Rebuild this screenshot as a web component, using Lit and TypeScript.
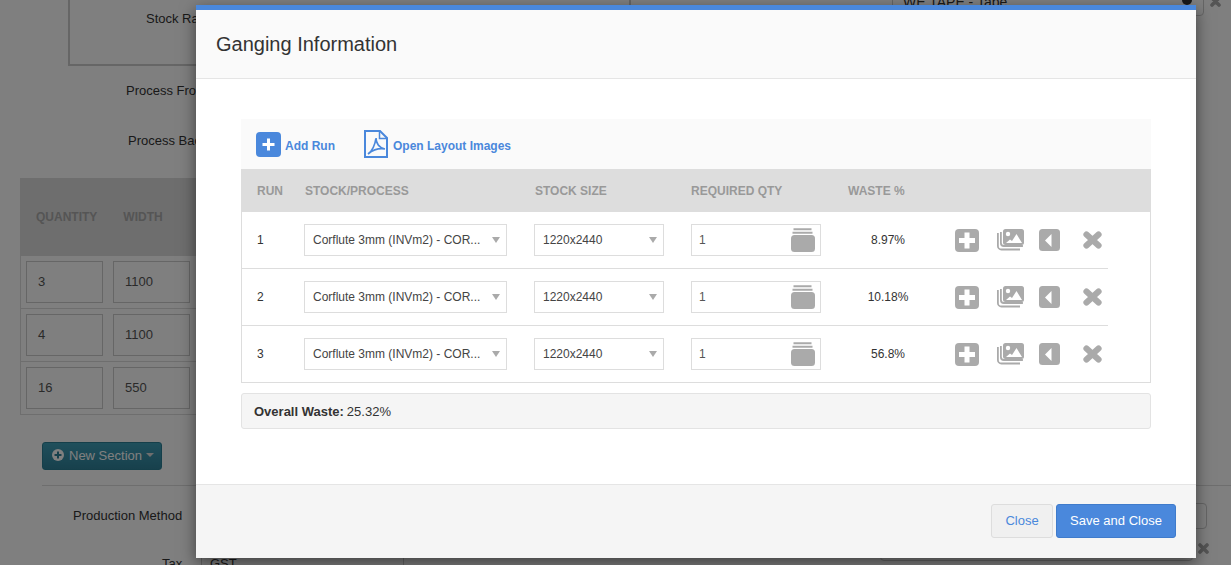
import { LitElement, css, html } from "lit";
import { customElement } from "lit/decorators.js";

const runs = [
  { id: 1, waste: "8.97%" },
  { id: 2, waste: "10.18%" },
  { id: 3, waste: "56.8%" },
];

const bgRows = [
  ["3", "1100"],
  ["4", "1100"],
  ["16", "550"],
];

const addIcon = html`<svg class="ic" width="25" height="25" viewBox="0 0 25 25">
  <rect width="25" height="25" rx="4" fill="currentColor"></rect>
  <path d="M12.500 6.500v12M6.500 12.500h12" stroke="#fff" stroke-width="3" fill="none"></path>
</svg>`;

const plusIcon = html`<svg class="ic" width="24" height="23" viewBox="0 0 24 23">
  <rect width="24" height="23" rx="4" fill="currentColor"></rect>
  <path d="M12 3.500v16M4 11.500h16" stroke="#fff" stroke-width="5" fill="none"></path>
</svg>`;

const stackIcon = html`<svg class="ic" width="27" height="22" viewBox="0 0 27 22" fill="none" stroke="currentColor">
  <path d="M.9 4v13a3.500 3.500 0 0 0 3.500 3.500h18.600" stroke-width="1.800"></path>
  <path d="M3.900 3v11a3 3 0 0 0 3 3h19" stroke-width="1.800"></path>
  <rect x="6" width="21" height="16" rx="2.500" fill="currentColor" stroke="none"></rect>
  <circle cx="11" cy="5" r="2.200" fill="#fff" stroke="none"></circle>
  <path d="M9 14l4-3.500 2 1.500 4.500-7 5.500 9z" fill="#fff" stroke="none"></path>
</svg>`;

const backIcon = html`<svg class="ic" width="21" height="22" viewBox="0 0 21 22">
  <rect width="21" height="22" rx="3.500" fill="currentColor"></rect>
  <path d="M12.500 5v13l-6.500-6.500z" fill="#fff"></path>
</svg>`;

const crossIcon = html`<svg class="ic" width="19" height="18" viewBox="0 0 19 18">
  <path d="M3.500 3.500l12 11M15.500 3.500l-12 11" stroke="currentColor" stroke-width="6.200" stroke-linecap="round"></path>
</svg>`;

const smallCross = html`<svg class="x" width="11" height="11" viewBox="0 0 11 11">
  <path d="M2 2l7 7M9 2l-7 7" stroke="currentColor" stroke-width="3.600" stroke-linecap="round"></path>
</svg>`;

const jarIcon = html`<svg class="jar" width="24" height="24" viewBox="0 0 24 24">
  <path d="M2.500 1.200h18M1.500 4.800h20" stroke="currentColor" stroke-width="2"></path>
  <rect y="7" width="24" height="17" rx="3.500" fill="currentColor"></rect>
</svg>`;

const pdfIcon = html`<svg width="24" height="28" viewBox="0 0 24 28" fill="none" stroke="#4a88dc">
  <path d="M1 1h15l7 7v19h-22z" stroke-width="2"></path>
  <path d="M15.500 1.500v7h7" stroke-width="1.500"></path>
  <path d="M4 24c4-3 7-9 8-16 0 5 3 10 9 11-6-1-12 1-17 5z" stroke-width="1.700"></path>
</svg>`;

@customElement("app-root")
export class AppRoot extends LitElement {
  static styles = css`
    :host {
      display: block;
      position: relative;
      width: 1231px;
      height: 565px;
      overflow: hidden;
      font-family: "Liberation Sans", Arial, sans-serif;
      font-size: 14px;
      color: #333;
      background: #fff;
    }

    /* page behind the modal */
    .page {
      height: 565px;
      overflow: hidden;
      font-size: 13px;
    }
    .top {
      display: flex;
      align-items: flex-start;
      height: 66px;
    }
    .top-box {
      margin-left: 68px;
      width: 563px;
      height: 66px;
      box-sizing: border-box;
      border-left: 2px solid #ccc;
      border-right: 2px solid #ccc;
      border-bottom: 2px solid #ccc;
      padding: 11px 0 0 76px;
      line-height: 16px;
    }
    .top-select {
      margin: -14px 0 0 261px;
      width: 312px;
      height: 30px;
      box-sizing: border-box;
      border: 1px solid #ccc;
      border-radius: 4px;
      padding: 7px 10px;
      line-height: 16px;
      font-size: 14px;
      display: flex;
      justify-content: space-between;
    }
    .chev {
      width: 10px;
      height: 10px;
      margin: 1px 1px 0 0;
      border-radius: 50%;
      background: #333;
    }
    .x {
      flex: none;
      color: #aaa;
    }
    .top .x {
      margin: -4px 0 0 6px;
    }
    .lbl {
      height: 50px;
      padding-left: 126px;
      white-space: nowrap;
      line-height: 20px;
    }
    .lbl.first {
      margin-top: 15px;
    }
    .lbl.second {
      padding-left: 128px;
    }
    .bg-table {
      margin: -3px 0 0 20px;
      border: 1px solid #ddd;
      width: 400px;
    }
    .bg-head {
      height: 77px;
      background: #ddd;
      color: #aaa;
      font-weight: bold;
      font-size: 12px;
      display: flex;
      padding: 31px 0 0 15px;
      box-sizing: border-box;
      gap: 26px;
    }
    .bg-row {
      display: flex;
      gap: 10px;
      padding: 5px 0 5px 5px;
      height: 53px;
      box-sizing: border-box;
      border-bottom: 1px solid #ddd;
    }
    .bg-row:last-child {
      border-bottom: 0;
      height: 52px;
    }
    .bg-cell {
      width: 77px;
      height: 42px;
      box-sizing: border-box;
      border: 1px solid #ccc;
      padding: 12px 11px;
      color: #555;
    }
    .new-section {
      margin: 27px 0 0 42px;
      width: 120px;
      height: 28px;
      box-sizing: border-box;
      border: 1px solid #2a7f95;
      border-radius: 3px;
      background: linear-gradient(#3f9fb8, #2f8199);
      color: #fff;
      display: flex;
      align-items: center;
      gap: 5px;
      padding: 0 0 2px 9px;
      white-space: nowrap;
    }
    .new-section .caret {
      border-left: 4px solid transparent;
      border-right: 4px solid transparent;
      border-top: 4px solid #ddd;
      margin-left: -1px;
    }
    .rule {
      margin: 15px 0 0 42px;
      height: 1px;
      background: #ddd;
    }
    .prod {
      height: 47px;
      box-sizing: border-box;
      padding: 17px 24px 0 73px;
      display: flex;
      justify-content: space-between;
      line-height: 24px;
    }
    .prod-label {
      padding-top: 1px;
    }
    .prod-select {
      width: 300px;
      height: 26px;
      box-sizing: border-box;
      border: 1px solid #ccc;
      border-radius: 4px;
    }
    .tax {
      display: flex;
      align-items: flex-start;
      padding-left: 162px;
    }
    .tax-label {
      width: 39px;
      padding-top: 22px;
      line-height: 18px;
    }
    .tax-input {
      margin-top: 12px;
      width: 203px;
      height: 40px;
      box-sizing: border-box;
      border: 1px solid #ccc;
      padding: 9px 8px 0;
      line-height: 18px;
    }
    .tax-select {
      margin-left: 476px;
      width: 313px;
      height: 28px;
      box-sizing: border-box;
      border: 1px solid #ccc;
      border-radius: 4px;
    }
    .tax .x {
      margin: 10px 0 0 5px;
    }

    .backdrop {
      position: absolute;
      inset: 0;
      background: rgba(0, 0, 0, 0.5);
    }

    .modal {
      position: absolute;
      left: 196px;
      top: 5px;
      width: 1000px;
      height: 553px;
      background: #fff;
      border-top: 5px solid #4a88dc;
      box-sizing: border-box;
      box-shadow: 0 5px 15px rgba(0, 0, 0, 0.5);
      display: flex;
      flex-direction: column;
    }
    .modal-head {
      height: 69px;
      box-sizing: border-box;
      background: #fafafa;
      border-bottom: 1px solid #e5e5e5;
      padding: 23px 20px 0;
      font-size: 20px;
      line-height: 22px;
      color: #333;
    }
    .modal-body {
      flex: 1;
      padding: 40px 45px 0;
    }
    .toolbar {
      height: 50px;
      background: #fafafa;
      display: flex;
      align-items: center;
      padding-left: 15px;
      box-sizing: border-box;
      font-size: 12px;
      font-weight: bold;
      color: #4a88dc;
    }
    .tool {
      display: flex;
      align-items: center;
      gap: 4px;
    }
    .tool + .tool {
      margin-left: 29px;
      gap: 5px;
    }
    .tool span {
      padding-top: 3px;
    }
    .runs {
      border: 1px solid #ddd;
      border-top: 0;
    }
    .cols {
      display: grid;
      grid-template-columns: 47px 230px 157px 157px 105px 1fr;
      padding-left: 15px;
      box-sizing: border-box;
    }
    .cols-head {
      height: 43px;
      margin: 0 -1px;
      padding: 0 0 0 16px;
      grid-template-columns: 48px 230px 156px 157px 105px 1fr;
      background: #ddd;
      color: #999;
      font-size: 12px;
      font-weight: bold;
      align-items: center;
    }
    .row {
      height: 57px;
      width: 866px;
      align-items: center;
      border-bottom: 1px solid #ddd;
      font-size: 12px;
    }
    .row:last-child {
      border-bottom: 0;
      height: 56px;
    }
    .field {
      height: 32px;
      box-sizing: border-box;
      border: 1px solid #ddd;
      background: #fff;
      display: flex;
      align-items: center;
      padding: 0 6px 0 8px;
      font-size: 12px;
      color: #444;
      white-space: nowrap;
    }
    .stock {
      width: 203px;
    }
    .size {
      width: 130px;
    }
    .field .text {
      flex: 1;
    }
    .field .caret {
      border-left: 4px solid transparent;
      border-right: 4px solid transparent;
      border-top: 6px solid #aaa;
    }
    .field.qty {
      width: 130px;
      padding: 0 5px 0 7px;
      color: #555;
    }
    .jar {
      color: #aaa;
      flex: none;
    }
    .waste {
      text-align: center;
      width: 76px;
      margin-left: 2px;
    }
    .actions {
      display: flex;
      align-items: center;
      color: #aaa;
      padding-left: 2px;
    }
    .ic {
      flex: none;
      display: block;
    }
    .actions .ic:nth-child(2) {
      margin-left: 18px;
    }
    .actions .ic:nth-child(3) {
      margin-left: 15px;
    }
    .actions .ic:nth-child(4) {
      margin-left: 23px;
    }
    .overall {
      margin-top: 10px;
      height: 36px;
      box-sizing: border-box;
      background: #f5f5f5;
      border: 1px solid #e3e3e3;
      border-radius: 3px;
      padding: 0 12px;
      display: flex;
      align-items: center;
      gap: 3px;
      font-size: 13px;
      color: #333;
    }
    .modal-foot {
      height: 74px;
      box-sizing: border-box;
      background: #f5f5f5;
      border-top: 1px solid #e5e5e5;
      display: flex;
      justify-content: flex-end;
      align-items: flex-start;
      gap: 3px;
      padding: 19px 20px 0 0;
    }
    .btn {
      height: 34px;
      box-sizing: border-box;
      border-radius: 3px;
      font-size: 13px;
      display: flex;
      align-items: center;
      justify-content: center;
      padding-bottom: 2px;
    }
    .btn.close {
      width: 62px;
      background: #f0f0f0;
      border: 1px solid #ddd;
      color: #4a88dc;
    }
    .btn.save {
      width: 120px;
      background: #4a88dc;
      border: 1px solid #3f7bcb;
      color: #fff;
    }
  `;

  render() {
    return html`
      <div class="page">
        <div class="top">
          <div class="top-box">Stock Rate</div>
          <div class="top-select"><span>WE TAPE - Tape</span><span class="chev"></span></div>
          ${smallCross}
        </div>
        <div class="lbl first">Process Front</div>
        <div class="lbl second">Process Back</div>
        <div class="bg-table">
          <div class="bg-head"><span>QUANTITY</span><span>WIDTH</span></div>
          ${bgRows.map(
            (r) => html`<div class="bg-row">
              <div class="bg-cell">${r[0]}</div>
              <div class="bg-cell">${r[1]}</div>
            </div>`
          )}
        </div>
        <div class="new-section">
          <svg width="12" height="12" viewBox="0 0 12 12">
            <circle cx="6" cy="6" r="6" fill="#fff"></circle>
            <path d="M6 2.500v7M2.500 6h7" stroke="#2f8199" stroke-width="2"></path>
          </svg>
          <span>New Section</span><span class="caret"></span>
        </div>
        <div class="rule"></div>
        <div class="prod"><span class="prod-label">Production Method</span><div class="prod-select"></div></div>
        <div class="tax">
          <div class="tax-label">Tax</div>
          <div class="tax-input">GST</div>
          <div class="tax-select"></div>
          ${smallCross}
        </div>
      </div>
      <div class="backdrop"></div>
      <div class="modal">
        <div class="modal-head">Ganging Information</div>
        <div class="modal-body">
          <div class="toolbar">
            <div class="tool">${addIcon}<span>Add Run</span></div>
            <div class="tool">${pdfIcon}<span>Open Layout Images</span></div>
          </div>
          <div class="runs">
            <div class="cols cols-head">
              <span>RUN</span><span>STOCK/PROCESS</span><span>STOCK SIZE</span>
              <span>REQUIRED QTY</span><span>WASTE %</span><span></span>
            </div>
            ${runs.map(
              (r) => html`<div class="cols row">
                <span>${r.id}</span>
                <div class="field stock">
                  <span class="text">Corflute 3mm (INVm2) - COR...</span><span class="caret"></span>
                </div>
                <div class="field size"><span class="text">1220x2440</span><span class="caret"></span></div>
                <div class="field qty"><span class="text">1</span>${jarIcon}</div>
                <div class="waste">${r.waste}</div>
                <div class="actions">${plusIcon}${stackIcon}${backIcon}${crossIcon}</div>
              </div>`
            )}
          </div>
          <div class="overall"><b>Overall Waste:</b> <span>25.32%</span></div>
        </div>
        <div class="modal-foot">
          <div class="btn close">Close</div>
          <div class="btn save">Save and Close</div>
        </div>
      </div>
    `;
  }
}
